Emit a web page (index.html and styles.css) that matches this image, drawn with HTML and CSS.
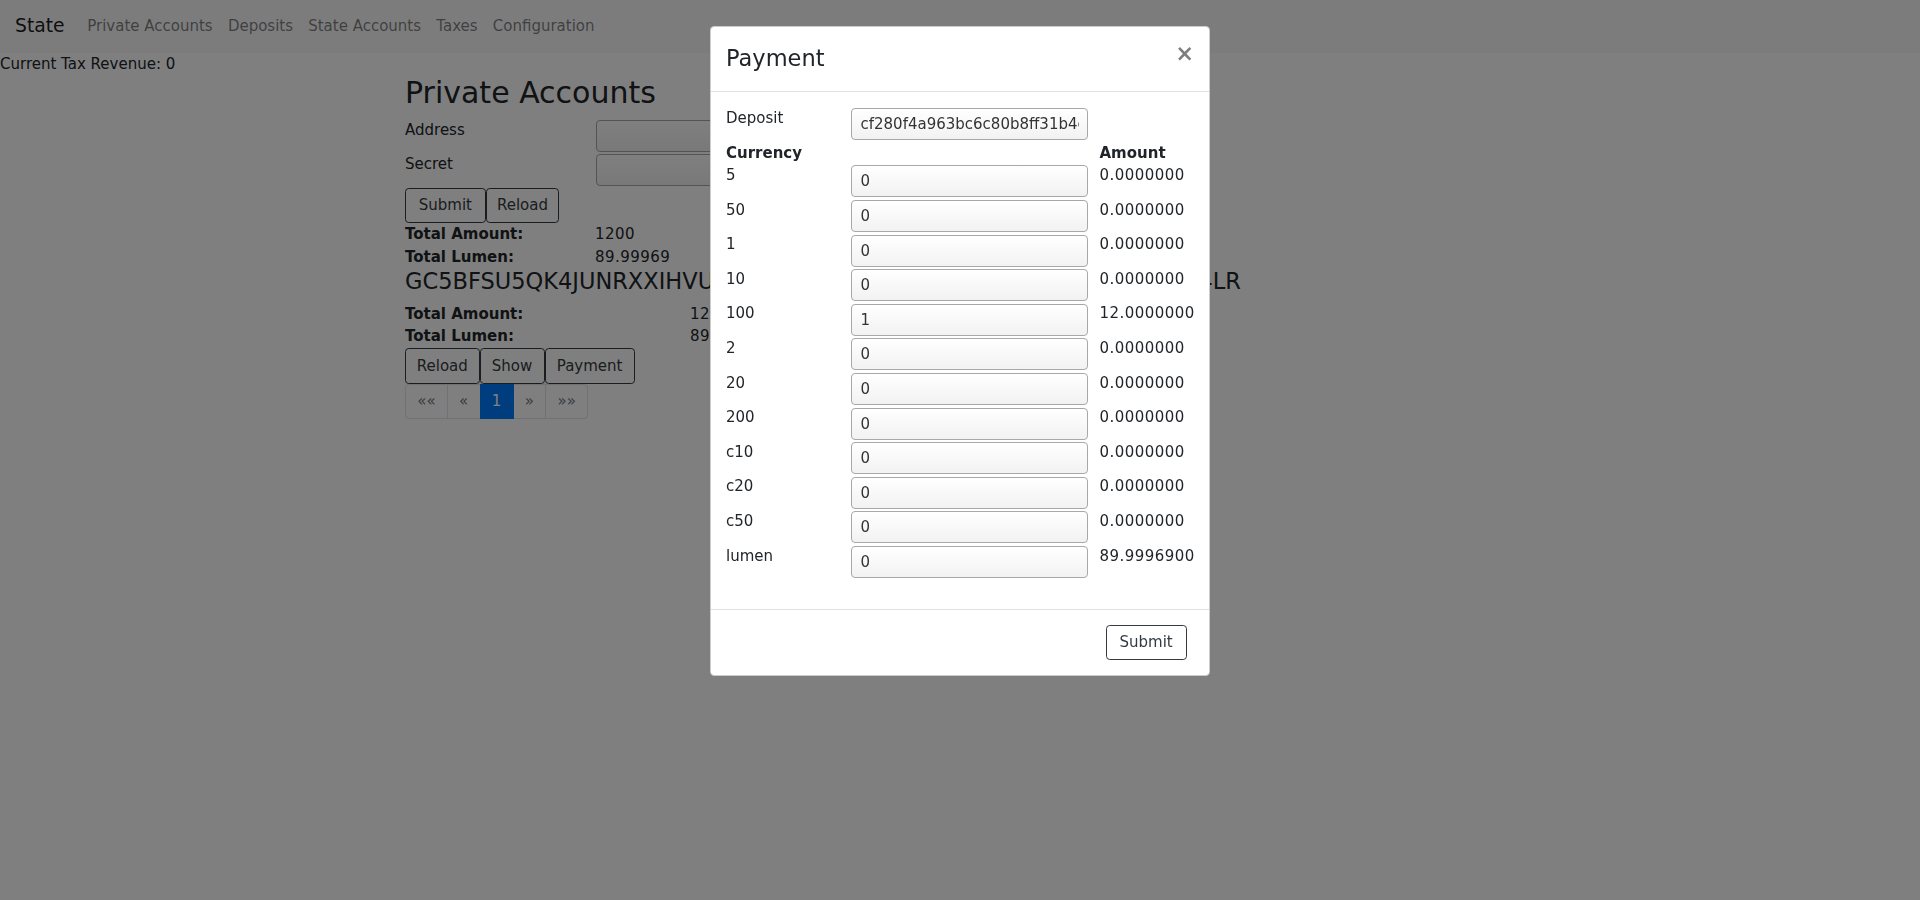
FILE: index.html
```html
<!DOCTYPE html>
<html lang="en">
<head>
<meta charset="utf-8">
<title>State</title>
<link rel="stylesheet" href="styles.css">
</head>
<body>
<nav class="navbar">
  <a class="brand" href="#">State</a>
  <ul class="nav">
    <li><a class="nav-link" href="#">Private Accounts</a></li>
    <li><a class="nav-link" href="#">Deposits</a></li>
    <li><a class="nav-link" href="#">State Accounts</a></li>
    <li><a class="nav-link" href="#">Taxes</a></li>
    <li><a class="nav-link" href="#">Configuration</a></li>
  </ul>
</nav>
<div class="revenue">Current Tax Revenue: 0</div>
<main class="container">
  <h2 class="page-title">Private Accounts</h2>
  <div class="login">
    <div class="row">
      <div class="col-2"><label>Address</label></div>
      <div class="col-10"><input class="field" type="text"></div>
    </div>
    <div class="row">
      <div class="col-2"><label>Secret</label></div>
      <div class="col-10"><input class="field" type="password"></div>
    </div>
    <div class="btns">
      <button class="btn btn-wide">Submit</button><button class="btn btn-tight">Reload</button>
    </div>
  </div>
  <div class="row">
    <div class="col-2 strong">Total Amount:</div>
    <div class="col num">1200</div>
  </div>
  <div class="row">
    <div class="col-2 strong">Total Lumen:</div>
    <div class="col num">89.99969</div>
  </div>
  <section class="account">
    <h4 class="key">GC5BFSU5QK4JUNRXXIHVUDKGWAZ7NPTRE3OYH2RCXL6QSBV5ENXHI4LR</h4>
    <div class="row">
      <div class="col-3 strong">Total Amount:</div>
      <div class="col num">1200</div>
    </div>
    <div class="row">
      <div class="col-3 strong">Total Lumen:</div>
      <div class="col num">89.99969</div>
    </div>
    <div class="btns">
      <button class="btn btn-mid">Reload</button><button class="btn">Show</button><button class="btn">Payment</button>
    </div>
    <ul class="pagination">
      <li class="page-item disabled"><span class="page-link">&laquo;&laquo;</span></li>
      <li class="page-item disabled"><span class="page-link">&laquo;</span></li>
      <li class="page-item active"><span class="page-link">1</span></li>
      <li class="page-item disabled"><span class="page-link">&raquo;</span></li>
      <li class="page-item disabled"><span class="page-link">&raquo;&raquo;</span></li>
    </ul>
  </section>
</main>

<div class="backdrop"></div>
<div class="modal">
  <div class="modal-dialog">
    <div class="modal-content">
      <div class="modal-header">
        <h4 class="modal-title">Payment</h4>
        <button class="close" type="button">&times;</button>
      </div>
      <div class="modal-body">
        <div class="pay-form">
          <div class="mrow">
            <div class="c3">Deposit</div>
            <div class="c6"><input class="field" type="text" value="cf280f4a963bc6c80b8ff31b4e7a0d2c9f15"></div>
          </div>
          <div class="mrow head">
            <div class="c3 strong">Currency</div>
            <div class="c6"></div>
            <div class="c3 strong">Amount</div>
          </div>
          <div class="mrow"><div class="c3">5</div><div class="c6"><input class="field" type="text" value="0"></div><div class="c3 num">0.0000000</div></div>
          <div class="mrow"><div class="c3">50</div><div class="c6"><input class="field" type="text" value="0"></div><div class="c3 num">0.0000000</div></div>
          <div class="mrow"><div class="c3">1</div><div class="c6"><input class="field" type="text" value="0"></div><div class="c3 num">0.0000000</div></div>
          <div class="mrow"><div class="c3">10</div><div class="c6"><input class="field" type="text" value="0"></div><div class="c3 num">0.0000000</div></div>
          <div class="mrow"><div class="c3">100</div><div class="c6"><input class="field" type="text" value="1"></div><div class="c3 num">12.0000000</div></div>
          <div class="mrow"><div class="c3">2</div><div class="c6"><input class="field" type="text" value="0"></div><div class="c3 num">0.0000000</div></div>
          <div class="mrow"><div class="c3">20</div><div class="c6"><input class="field" type="text" value="0"></div><div class="c3 num">0.0000000</div></div>
          <div class="mrow"><div class="c3">200</div><div class="c6"><input class="field" type="text" value="0"></div><div class="c3 num">0.0000000</div></div>
          <div class="mrow"><div class="c3">c10</div><div class="c6"><input class="field" type="text" value="0"></div><div class="c3 num">0.0000000</div></div>
          <div class="mrow"><div class="c3">c20</div><div class="c6"><input class="field" type="text" value="0"></div><div class="c3 num">0.0000000</div></div>
          <div class="mrow"><div class="c3">c50</div><div class="c6"><input class="field" type="text" value="0"></div><div class="c3 num">0.0000000</div></div>
          <div class="mrow"><div class="c3">lumen</div><div class="c6"><input class="field" type="text" value="0"></div><div class="c3 num">89.9996900</div></div>
        </div>
      </div>
      <div class="modal-footer">
        <button class="btn btn-wide" type="button">Submit</button>
      </div>
    </div>
  </div>
</div>
</body>
</html>
```

FILE: styles.css
```css
html {
  font-size: 15px;
}
*, *::before, *::after {
  box-sizing: border-box;
}
body {
  margin: 0;
  font-family: "DejaVu Sans", sans-serif;
  font-size: 15px;
  line-height: 1.5;
  color: #212529;
  background: #fff;
  overflow: hidden;
}
a {
  text-decoration: none;
}
ul {
  list-style: none;
  margin: 0;
  padding: 0;
}

/* navbar */
.navbar {
  display: flex;
  align-items: center;
  padding: 7.5px 15px;
  background: #f8f9fa;
}
.brand {
  font-size: 18.75px;
  line-height: 1.5;
  padding: 4.6875px 0;
  margin-right: 15px;
  color: rgba(0, 0, 0, 0.9);
}
.nav {
  display: flex;
}
.nav-link {
  display: block;
  padding: 7.5px 7.6px;
  color: rgba(0, 0, 0, 0.5);
}

.revenue {
  line-height: 22.5px;
}

/* page */
.container {
  width: 1140px;
  margin: 0 auto;
  padding: 0 15px;
}
.page-title {
  font-size: 30px;
  font-weight: 500;
  line-height: 1.2;
  margin: 0 0 7.5px;
}
.row {
  display: flex;
  margin: 0 -15px;
}
.col-2, .col-3, .col-10, .col {
  padding: 0 15px;
  min-height: 1px;
  min-width: 0;
}
.col-2 { flex: 0 0 16.6667%; max-width: 16.6667%; }
.col-3 { flex: 0 0 25%; max-width: 25%; }
.col-10 { flex: 0 0 83.3333%; max-width: 83.3333%; }
.col { flex: 1 1 0; }
.strong {
  font-weight: 700;
}
.num {
  letter-spacing: 0.45px;
}
.field {
  display: block;
  width: 237px;
  height: 32px;
  margin: 1.3px 0 1.3px 0.5px;
  padding: 0 8px 0 8.5px;
  font-family: "DejaVu Sans", sans-serif;
  font-size: 15px;
  color: #333;
  border: 1px solid #a8a8a8;
  border-radius: 4px;
  background: linear-gradient(to bottom, #ffffff, #f2f2f2);
  outline: none;
}
.btns {
  display: flex;
}
.btn {
  font-family: "DejaVu Sans", sans-serif;
  font-size: 15px;
  line-height: 1.5;
  padding: 5.625px 11.25px;
  color: #343a40;
  background: transparent;
  border: 1px solid #343a40;
  border-radius: 3.75px;
  margin: 0;
}
.btn-wide {
  padding-left: 12.75px;
  padding-right: 12.75px;
}
.btn-tight {
  padding-left: 10.25px;
  padding-right: 10.25px;
}
.btn-mid {
  padding-left: 10.75px;
  padding-right: 10.75px;
}
.key {
  font-size: 22.5px;
  font-weight: 500;
  line-height: 1.2;
  margin: 0 0 7.5px;
  white-space: nowrap;
}
.pagination {
  display: flex;
}
.page-link {
  display: block;
  padding: 7.5px 11.25px;
  line-height: 1.25;
  color: #007bff;
  background: #fff;
  border: 1px solid #dee2e6;
  margin-left: -1px;
}
.page-item:first-child .page-link {
  margin-left: 0;
  border-radius: 3.75px 0 0 3.75px;
}
.page-item:last-child .page-link {
  border-radius: 0 3.75px 3.75px 0;
}
.page-item.disabled .page-link {
  color: #6c757d;
}
.page-item.active .page-link {
  color: #fff;
  background: #007bff;
  border-color: #007bff;
  position: relative;
}

/* modal */
.backdrop {
  position: fixed;
  inset: 0;
  background: #000;
  opacity: 0.5;
}
.modal {
  position: fixed;
  inset: 0;
}
.modal-dialog {
  width: 500px;
  margin: 26.25px auto;
}
.modal-content {
  background: #fff;
  border: 1px solid rgba(0, 0, 0, 0.2);
  border-radius: 4.5px;
}
.modal-header {
  display: flex;
  align-items: flex-start;
  justify-content: space-between;
  padding: 15px;
  border-bottom: 1px solid #dee2e6;
}
.modal-title {
  margin: 0;
  font-size: 22.5px;
  font-weight: 500;
  line-height: 1.5;
}
.close {
  padding: 15px;
  margin: -15px -15px -15px auto;
  background: transparent;
  border: 0;
  font-family: "DejaVu Sans", sans-serif;
  font-size: 22.5px;
  font-weight: 700;
  line-height: 1;
  color: #000;
  opacity: 0.5;
}
.modal-body {
  padding: 15px;
}
.pay-form {
  margin-bottom: 15px;
}
.mrow {
  display: flex;
  margin: 0 -15px;
}
.c3, .c6 {
  padding: 0 15px;
  min-height: 1px;
  min-width: 0;
  white-space: nowrap;
}
.c3 { flex: 0 0 25%; max-width: 25%; }
.c6 { flex: 0 0 50%; max-width: 50%; }
.modal-footer {
  display: flex;
  justify-content: flex-end;
  align-items: center;
  padding: 10.75px 18.75px 10.75px 11.25px;
  border-top: 1px solid #dee2e6;
}
.modal-footer .btn {
  margin: 3.75px;
}
```
